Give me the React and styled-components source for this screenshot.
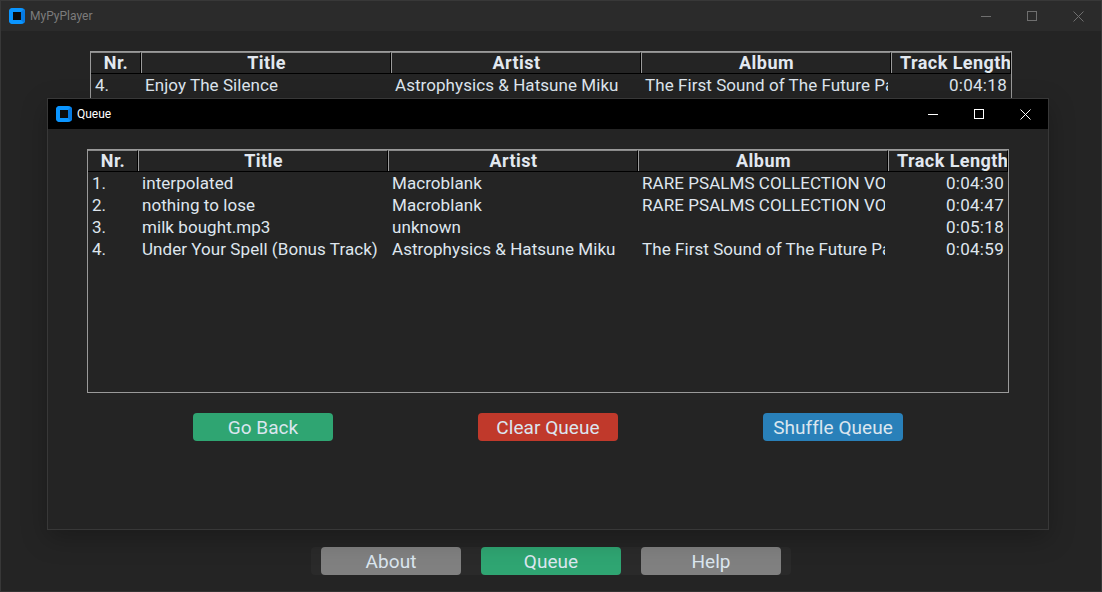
import styled, { createGlobalStyle } from 'styled-components'

const Global = createGlobalStyle`
  html, body { margin: 0; padding: 0; background: #242424; overflow: hidden; }
  * { box-sizing: border-box; }
  body { font-family: Roboto, "Liberation Sans", sans-serif; }
`

const COLS = '50px 250px 250px 250px 120px'

const Main = styled.div`
  position: relative;
  width: 1102px;
  height: 592px;
  display: flex;
  flex-direction: column;
  background: #242424;
  border: 1px solid #383838;
  border-bottom-color: #333;
`
const TitleBar = styled.div`
  height: 30px;
  flex: none;
  display: flex;
  align-items: center;
  padding-left: 8px;
  background: ${(p) => (p.$active ? '#000' : '#2b2b2b')};
  color: ${(p) => (p.$active ? '#fff' : '#7c7c7c')};
  font-size: 12px;
`
const AppIcon = styled.div`
  width: 16px;
  height: 16px;
  margin-right: 5px;
  border-radius: 4px;
  border: 4px solid #0a95ff;
  border-right-color: #0679e0;
  background: #0c0c0c;
`
const WinButtons = styled.div`
  margin-left: auto;
  display: flex;
  align-items: center;
`
const WinButton = styled.div`
  width: 46px;
  height: 30px;
  display: flex;
  align-items: center;
  justify-content: center;
`
const Content = styled.div`
  flex: 1;
  display: flex;
  flex-direction: column;
  padding: 20px 89px 16px;
`
const Table = styled.div`
  width: 922px;
  height: ${(p) => p.$height}px;
  flex: none;
  border: 1px solid #9a9a9a;
  background: #242424;
  overflow: hidden;
`
const Row = styled.div`
  display: grid;
  grid-template-columns: ${COLS};
  height: 22px;
`
const HeadRow = styled(Row)`
  border-bottom: 1px solid #000;
`
const HeadCell = styled.div`
  padding-left: ${(p) => (p.$last ? '8px' : '1px')};
  border-top: 1px solid #8a8a8a;
  border-left: ${(p) => (p.$first ? 'none' : '1px solid #9a9a9a')};
  border-right: 1px solid #000;
  color: #e2e8f0;
  font-size: 18px;
  font-weight: 700;
  line-height: 20px;
  letter-spacing: 0.45px;
  text-align: center;
  white-space: nowrap;
  overflow: hidden;
`
const Cell = styled.div`
  margin-right: ${(p) => (p.$end ? '4px' : '3px')};
  padding-left: 4px;
  color: #dfe6ee;
  font-size: 17px;
  letter-spacing: ${(p) => (p.$end ? '0.3px' : '0.06px')};
  line-height: 22px;
  white-space: nowrap;
  overflow: hidden;
  text-align: ${(p) => (p.$end ? 'right' : 'left')};
`
const NavBar = styled.div`
  margin: auto auto 0;
  width: 480px;
  height: 28px;
  flex: none;
  display: flex;
  gap: 20px;
  justify-content: center;
  background: #2a2a2a;
  border-radius: 4px;
`
const Button = styled.div`
  width: 140px;
  height: 28px;
  display: flex;
  align-items: center;
  justify-content: center;
  border-radius: 4px;
  background: ${(p) => p.$color};
  color: #dbe6ef;
  font-size: 19px;
  letter-spacing: 0.05px;
`
const QueueWindow = styled.div`
  position: absolute;
  left: 46px;
  top: 97px;
  width: 1002px;
  height: 432px;
  display: flex;
  flex-direction: column;
  background: #242424;
  border: 1px solid #383838;
  box-shadow: 0 8px 24px rgba(0, 0, 0, 0.25);
`
const QueueBody = styled.div`
  flex: 1;
  padding: 20px 39px;
`
const Actions = styled.div`
  margin-top: 20px;
  display: grid;
  grid-template-columns: repeat(3, 140px);
  justify-content: space-between;
  padding: 0 106px;
`

const HEADERS = ['Nr.', 'Title', 'Artist', 'Album', 'Track Length']

const TRACKS = [
  ['1.', 'interpolated', 'Macroblank', 'RARE PSALMS COLLECTION VOL. 1', '0:04:30'],
  ['2.', 'nothing to lose', 'Macroblank', 'RARE PSALMS COLLECTION VOL. 1', '0:04:47'],
  ['3.', 'milk bought.mp3', 'unknown', '', '0:05:18'],
  ['4.', 'Under Your Spell (Bonus Track)', 'Astrophysics & Hatsune Miku', 'The First Sound of The Future Part 1', '0:04:59'],
]

function TrackTable({ rows, height }) {
  return (
    <Table $height={height}>
      <HeadRow>
        {HEADERS.map((h, i) => (
          <HeadCell key={h} $first={i === 0} $last={i === 4}>{h}</HeadCell>
        ))}
      </HeadRow>
      {rows.map((r) => (
        <Row key={r[1]}>
          {r.map((c, i) => (
            <Cell key={i} $end={i === 4}>{c}</Cell>
          ))}
        </Row>
      ))}
    </Table>
  )
}

function Controls({ active }) {
  const color = active ? '#fff' : '#6f6f6f'
  return (
    <WinButtons>
      <WinButton>
        <svg width="10" height="10" viewBox="0 0 10 10" shapeRendering="crispEdges">
          <rect x="0" y="5" width="10" height="1" fill={color} />
        </svg>
      </WinButton>
      <WinButton>
        <svg width="10" height="10" viewBox="0 0 10 10" shapeRendering="crispEdges">
          <rect x="0.5" y="0.5" width="9" height="9" fill="none" stroke={color} />
        </svg>
      </WinButton>
      <WinButton>
        <svg width="11" height="11" viewBox="0 0 11 11">
          <path d="M0.5 0.5 L10.5 10.5 M10.5 0.5 L0.5 10.5" fill="none" stroke={color} strokeWidth="1" />
        </svg>
      </WinButton>
    </WinButtons>
  )
}

export default function App() {
  return (
    <Main>
      <Global />
      <TitleBar>
        <AppIcon />
        MyPyPlayer
        <Controls />
      </TitleBar>
      <Content>
        <TrackTable
          height={300}
          rows={[['4.', 'Enjoy The Silence', 'Astrophysics & Hatsune Miku', 'The First Sound of The Future Part 1', '0:04:18']]}
        />
        <NavBar>
          <Button $color="#808080">About</Button>
          <Button $color="#2fa572">Queue</Button>
          <Button $color="#808080">Help</Button>
        </NavBar>
      </Content>
      <QueueWindow>
        <TitleBar $active>
          <AppIcon />
          Queue
          <Controls active />
        </TitleBar>
        <QueueBody>
          <TrackTable height={244} rows={TRACKS} />
          <Actions>
            <Button $color="#2fa572">Go Back</Button>
            <Button $color="#c0392b">Clear Queue</Button>
            <Button $color="#2980b9">Shuffle Queue</Button>
          </Actions>
        </QueueBody>
      </QueueWindow>
    </Main>
  )
}
